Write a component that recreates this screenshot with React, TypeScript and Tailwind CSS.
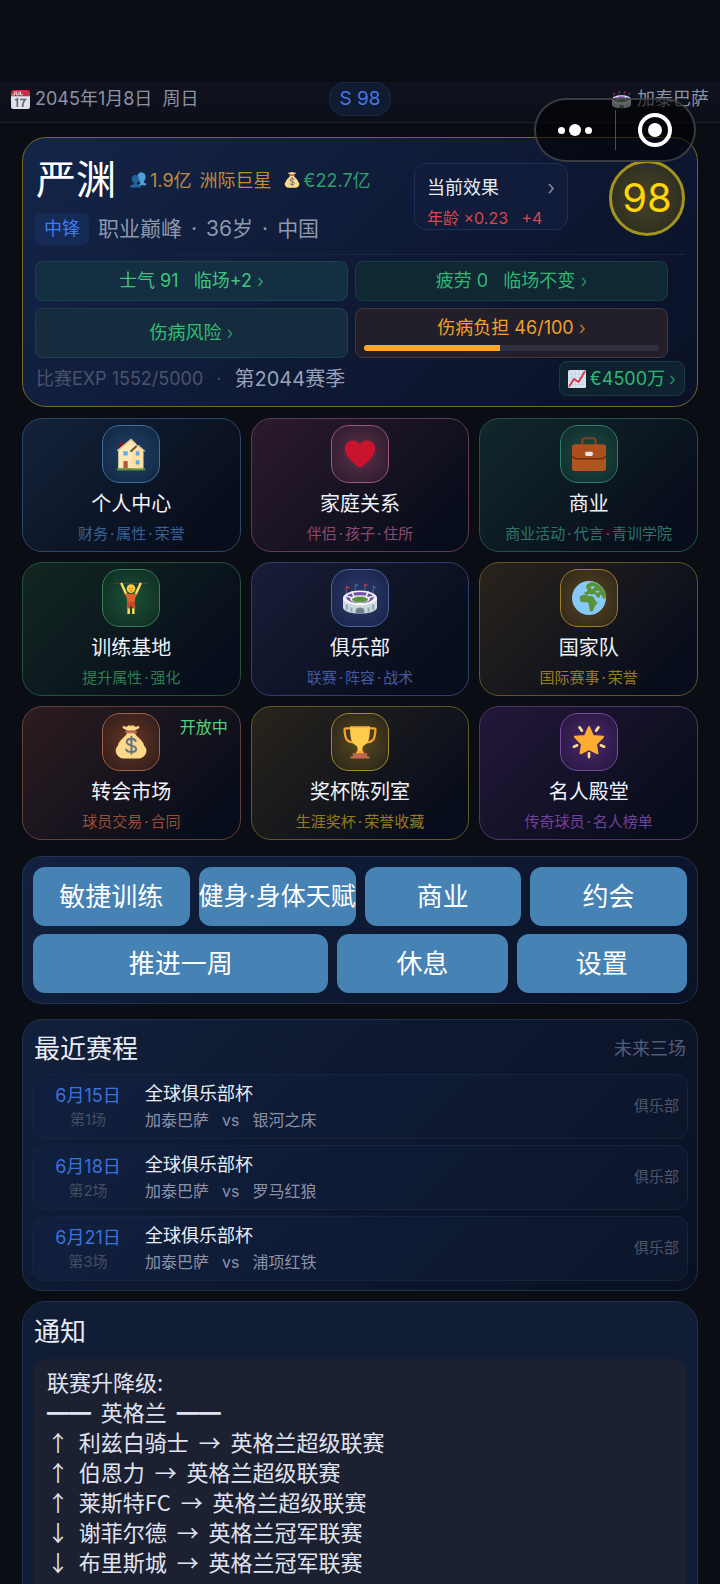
import { Fragment } from "react";
import type { ReactNode } from "react";

type IconProps = { className?: string };

function CalendarIcon({ className }: IconProps) {
  return (
    <svg viewBox="0 0 36 36" className={className} aria-hidden="true">
      <path fill="#dfe3e9" d="M36 32a4 4 0 0 1-4 4H4a4 4 0 0 1-4-4V9h36z" />
      <path fill="#d32b45" d="M30 0H6a6 6 0 0 0-6 6v6h36V6a6 6 0 0 0-6-6" />
      <g stroke="#f3d9de" strokeWidth="2" fill="none">
        <path d="M7 3v5c0 2-4 2-4 0M10 3v4c0 3 5 3 5 0V3M18 3v6h4" />
      </g>
      <g stroke="#5f6872" strokeWidth="3" fill="none">
        <path d="M8 19l4-2v15M17 18h10c-4 4-5 8-5 14" />
      </g>
    </svg>
  );
}

function FansIcon({ className }: IconProps) {
  return (
    <svg viewBox="0 0 36 36" className={className} aria-hidden="true">
      <path
        fill="#4fa0da"
        d="M24 26c-2-1-3-3-2-5-5-3-6-7-5-12 1-6 5-9 10-8 6 1 8 5 8 10 0 4-1 8-4 10 0 2 0 3 2 4l3 1v4H18z"
      />
      <path
        fill="#226699"
        d="M0 35c0-5 3-6 7-7 2-1 2-3 1-4-3-2-4-6-4-9 0-5 3-8 8-8s8 3 8 8c0 4-1 7-4 9-1 2-1 3 1 4 5 1 8 2 8 7z"
      />
    </svg>
  );
}

function MoneyBagIcon({ className }: IconProps) {
  return (
    <svg viewBox="0 0 36 36" className={className} aria-hidden="true">
      <path
        fill="#fdd888"
        d="M31.9 22C30.7 15.500 24 13 22 8.500h-8C12 13 5.300 15.500 4.100 22c-2 2-2.800 5-2 7 1 4 5 6.500 9 6.500h14c4 0 8-2.500 9-6.500.8-2 0-5-2.200-7"
      />
      <path
        fill="#fdd888"
        d="M14.500 6L9.500 3.500c-1-1.500.3-3.500 2-2 1 .8 2.200.5 3-.5 1-1.200 2.200-.8 3.500 0 1.300-.8 2.500-1.200 3.500 0 .8 1 2 1.300 3 .5 1.700-1.500 3 .5 2 2L21.500 6z"
      />
      <path fill="#bf6952" d="M13 6h10a1.300 1.300 0 0 1 0 2.800H13A1.300 1.300 0 0 1 13 6" />
      <path
        fill="none"
        stroke="#67757f"
        strokeWidth="2.200"
        strokeLinecap="round"
        d="M23 17c-1-3-9.500-3.500-9.500 1 0 4.500 10 3 10 7.500 0 4.200-9.500 4-10.500.5M18.500 12.500v18"
      />
    </svg>
  );
}

function ChartIcon({ className }: IconProps) {
  return (
    <svg viewBox="0 0 36 36" className={className} aria-hidden="true">
      <rect width="36" height="36" rx="3" fill="#dde5ec" />
      <path
        stroke="#b9d2e6"
        strokeWidth="1.500"
        d="M8 1v34M15 1v34M22 1v34M29 1v34M1 8h34M1 15h34M1 22h34M1 29h34"
      />
      <path
        fill="none"
        stroke="#dd2e44"
        strokeWidth="3.500"
        strokeLinecap="round"
        strokeLinejoin="round"
        d="M3 32l9-14 9 6L33 4"
      />
    </svg>
  );
}

function HouseIcon({ className }: IconProps) {
  return (
    <svg viewBox="0 0 36 36" className={className} aria-hidden="true">
      <path fill="#5c913b" d="M3 33h30v2.500H3z" />
      <path fill="#8a1022" d="M6 6h5v8H6z" />
      <path fill="#ffe8b6" d="M4.500 14L18 3l13 11v19H4.500z" />
      <path fill="#ffe0a0" d="M19 17l6-6 6 5v17H19z" />
      <path
        fill="none"
        stroke="#e1c78d"
        strokeWidth="1.500"
        d="M3.500 14.500L18 2.500l5 5M32.500 15l-7-6"
      />
      <path stroke="#66543f" strokeWidth="2.200" d="M17.500 15.500l6.500-6" />
      <path fill="#55acee" d="M10 15h4.500v4.500H10zM23 15h4v4.500h-4zM23 24.500h4V29h-4z" />
      <path fill="#b5563c" d="M10 25.500h4.500V33H10z" />
    </svg>
  );
}

function HeartIcon({ className }: IconProps) {
  return (
    <svg viewBox="-2 -2 40 40" className={className} aria-hidden="true">
      <path
        fill="#c9142f"
        d="M35.900 11.800a9.600 9.600 0 0 0-17.900-4.900A9.600 9.600 0 0 0 .1 11.800C.1 20 10 29 18 34.500c8-5.500 17.900-14.500 17.900-22.700"
      />
    </svg>
  );
}

function BriefcaseIcon({ className }: IconProps) {
  return (
    <svg viewBox="0 0 36 36" className={className} aria-hidden="true">
      <path
        fill="none"
        stroke="#8f4219"
        strokeWidth="2"
        d="M11 10V4a2.500 2.500 0 0 1 2.500-2.500h9A2.500 2.500 0 0 1 25 4v6"
      />
      <rect y="8" width="36" height="28" rx="3" fill="#b0541f" />
      <path fill="#ac4f1e" d="M3 8h30a3 3 0 0 1 3 3v9q-2 2-5 2H5q-3 0-5-2v-9a3 3 0 0 1 3-3" />
      <path fill="none" stroke="#6b2a12" strokeWidth="1.400" d="M0 20.500q2 2.500 5 2.500h26q3 0 5-2.500" />
      <rect x="14" y="15.500" width="8" height="4.500" rx="1.500" fill="#e8ebee" />
    </svg>
  );
}

function LifterIcon({ className }: IconProps) {
  return (
    <svg viewBox="0 0 36 36" className={className} aria-hidden="true">
      <path stroke="#44505c" strokeWidth="1" d="M0 2.500h36" />
      <path stroke="#552636" strokeWidth="1.200" d="M2 1.500v2M5 1v3M31 1v3M34 1.500v2" />
      <path
        fill="none"
        stroke="#ffdc5d"
        strokeWidth="2.600"
        strokeLinecap="round"
        d="M8 3l5 11M28 3l-5 11"
      />
      <path fill="#ffdc5d" d="M14.200 28h2.600v7h-2.600zM19.200 28h2.600v7h-2.600z" />
      <circle cx="18" cy="8" r="4.600" fill="#ffcb3c" />
      <path fill="#e0602c" d="M11.500 13l3.500.500h6l3.500-.500-2 5-.500 5h-8l-.500-5z" />
      <path fill="#c44a2a" d="M14 22h8l.8 7h-3.300L18 25.500 16.500 29h-3.300z" />
      <path fill="#9d6b1e" d="M16 7.500h1v1h-1zM19 7.500h1v1h-1zM16.500 10h3v.8h-3z" />
    </svg>
  );
}

function StadiumIcon({ className }: IconProps) {
  return (
    <svg viewBox="0 0 36 36" className={className} aria-hidden="true">
      <path stroke="#66727f" strokeWidth=".8" d="M3.500 5v9M13 3v9M23 3v9M32 5v9" />
      <path fill="#c12a44" d="M3.500 5l4 1.800-4 1.800zM23 2.500l4 1.800-4 1.800z" />
      <path fill="#2d6794" d="M13 2.500l4 1.800-4 1.800zM32 5l4 1.800-4 1.800z" />
      <path fill="#cfd8de" d="M0 18h36v10c0 4-8 6.500-18 6.500S0 32 0 28z" />
      <ellipse cx="18" cy="18" rx="18" ry="8" fill="#eef2f5" />
      <ellipse cx="18" cy="17.500" rx="14.500" ry="5.800" fill="#7450a8" />
      <path
        stroke="#eef2f5"
        strokeWidth="1.600"
        d="M9 11l3 6M27 11l-3 6M4 16l6 2M32 16l-6 2"
      />
      <ellipse cx="18" cy="19" rx="10.500" ry="4" fill="#eef2f5" />
      <ellipse cx="18" cy="19.500" rx="8.500" ry="3" fill="#5c913b" />
      <path stroke="#94a3ae" strokeWidth="2" d="M4 25v6M9 28v5M27 28v5M32 25v6" />
      <path fill="#6f7f8b" d="M13.500 34v-3c0-4 9-4 9 0v3z" />
    </svg>
  );
}

function GlobeIcon({ className }: IconProps) {
  return (
    <svg viewBox="0 0 36 36" className={className} aria-hidden="true">
      <circle cx="18" cy="18" r="18" fill="#88c9f9" />
      <path
        fill="#5c913b"
        d="M8.500 16.500c2-2.500 5-2 7-2 1 1.500 3 1.500 5 1.500 2.500 0 3 3 4.500 5.500 1 1 2.500 0 2 1.500-1 2.500-3.500 3.500-3.500 5.500-.5 2-1.500 4-3 4-2 0-2-3.500-2.500-5.500-.5-1.500.5-3-1-4-2.500-.5-7 .500-8.500-2-.5-2-.500-3.500 0-4.500"
      />
      <path
        fill="#5c913b"
        d="M15 5c1-2 3-2 4-3.500C27 .5 34.500 8 36 17c-1 .500-1.500 3-2.500 2-1-1.500-1.500-4-3.500-4.500-1 .500 0 3-2 3.500-2-.500-2.500-3.500-4-4-2-.500-2.500 1-4 0-1.500-1-3 .500-4.500.5s-3-1-2-2.500c1-.8 2.500-.5 3-2C16.500 8 14 7 15 5"
      />
      <path fill="#88c9f9" d="M20 6c2-1.500 4.500-.5 3.500 1s-4 2.500-3.500-1M25 10.500h4v1.800h-4z" />
    </svg>
  );
}

function TrophyIcon({ className }: IconProps) {
  return (
    <svg viewBox="0 0 36 36" className={className} aria-hidden="true">
      <path
        fill="none"
        stroke="#f5a12d"
        strokeWidth="2.400"
        strokeLinejoin="round"
        d="M9 3.500H3.500c-2 0-2 1-1.800 3C2.500 14 3 18.500 12 18.500M27 3.500h5.500c2 0 2 1 1.800 3C33.500 14 33 18.500 24 18.500"
      />
      <path fill="#ffcc4d" d="M7.500 1.500h21c0 11-1 17.500-6 20-2 1.500-2 3-2 5l1 4h-7l1-4c0-2 0-3.500-2-5-5-2.500-6-9-6-20" />
      <path fill="#ffac33" d="M7.500 1.500h21v1.500h-21zM15 27h6l1.500 3h-9z" />
      <path fill="#c1694f" d="M10.500 30h15v3h2.500v2.500H8V33h2.500z" />
    </svg>
  );
}

function StarIcon({ className }: IconProps) {
  return (
    <svg viewBox="0 0 36 36" className={className} aria-hidden="true">
      <path
        fill="#ffac33"
        stroke="#ffac33"
        strokeWidth="2"
        strokeLinejoin="round"
        d="M18 2l4.200 9.500L33 12.500l-7.500 7.800L27 30l-9-4.500L9 30l1.500-9.700L3 12.500l10.800-1z"
      />
      <path
        stroke="#ffe08a"
        strokeWidth="2.800"
        strokeLinecap="round"
        d="M8 2.500l2.500 3.500M28 2.500L25.500 6M2 23l3.500-1.500M34 23l-3.500-1.500M18 30v4"
      />
    </svg>
  );
}

const tiles = [
  {
    title: "个人中心",
    sub: "财务·属性·荣誉",
    Icon: HouseIcon,
    card: "border-[#2b4668] from-[#14233a]",
    box: "border-[#3f6f9f] from-[#1c426c] to-[#12253f]",
    text: "text-[#376196]",
  },
  {
    title: "家庭关系",
    sub: "伴侣·孩子·住所",
    Icon: HeartIcon,
    card: "border-[#613c57] from-[#2c1a2c]",
    box: "border-[#9a5a7c] from-[#5c3048] to-[#2a1a2c]",
    text: "text-[#8c4a70]",
  },
  {
    title: "商业",
    sub: "商业活动·代言·青训学院",
    Icon: BriefcaseIcon,
    card: "border-[#245048] from-[#11282b]",
    box: "border-[#2e8069] from-[#1c4c42] to-[#0f2a2b]",
    text: "text-[#2a7767]",
  },
  {
    title: "训练基地",
    sub: "提升属性·强化",
    Icon: LifterIcon,
    card: "border-[#24513a] from-[#122620]",
    box: "border-[#357f57] from-[#1a5236] to-[#102a23]",
    text: "text-[#2f7d4e]",
  },
  {
    title: "俱乐部",
    sub: "联赛·阵容·战术",
    Icon: StadiumIcon,
    card: "border-[#323e6c] from-[#191d38]",
    box: "border-[#4c63a0] from-[#2b3b70] to-[#192344]",
    text: "text-[#4459a0]",
  },
  {
    title: "国家队",
    sub: "国际赛事·荣誉",
    Icon: GlobeIcon,
    card: "border-[#655426] from-[#2a231b]",
    box: "border-[#a17f29] from-[#5a4720] to-[#2c2519]",
    text: "text-[#9c7a25]",
  },
  {
    title: "转会市场",
    sub: "球员交易·合同",
    Icon: MoneyBagIcon,
    badge: "开放中",
    card: "border-[#64403a] from-[#2c1c1f]",
    box: "border-[#a55f43] from-[#683720] to-[#2b1b1c]",
    text: "text-[#95503a]",
  },
  {
    title: "奖杯陈列室",
    sub: "生涯奖杯·荣誉收藏",
    Icon: TrophyIcon,
    card: "border-[#625825] from-[#29241b]",
    box: "border-[#a18c2c] from-[#5a4b1c] to-[#26221a]",
    text: "text-[#967a24]",
  },
  {
    title: "名人殿堂",
    sub: "传奇球员·名人榜单",
    Icon: StarIcon,
    card: "border-[#4c3764] from-[#24173a]",
    box: "border-[#76499c] from-[#4c2870] to-[#24173b]",
    text: "text-[#74409a]",
  },
];

const matches = [
  { date: "6月15日", round: "第1场", home: "加泰巴萨", away: "银河之床" },
  { date: "6月18日", round: "第2场", home: "加泰巴萨", away: "罗马红狼" },
  { date: "6月21日", round: "第3场", home: "加泰巴萨", away: "浦项红铁" },
];

const notices = [
  "联赛升降级:",
  "━━  英格兰  ━━",
  "↑  利兹白骑士  →  英格兰超级联赛",
  "↑  伯恩力  →  英格兰超级联赛",
  "↑  莱斯特FC  →  英格兰超级联赛",
  "↓  谢菲尔德  →  英格兰冠军联赛",
  "↓  布里斯城  →  英格兰冠军联赛",
];

const actionClass =
  "flex h-[59px] min-w-0 items-center justify-center rounded-xl bg-[#4682b4] whitespace-nowrap text-white";

function Chevron() {
  return <span className="opacity-70">›</span>;
}

// Joins the parts of a label with evenly spaced middle dots
function Dotted({ text }: { text: string }) {
  return (
    <>
      {text.split("·").map((part, i) => (
        <Fragment key={part}>
          {i > 0 && <span className="mx-[2px]">·</span>}
          {part}
        </Fragment>
      ))}
    </>
  );
}

function StatButton({
  children,
  className,
}: {
  children: ReactNode;
  className: string;
}) {
  return (
    <button
      type="button"
      className={`flex flex-col items-center justify-center rounded-lg border px-2 text-[18px] leading-6 ${className}`}
    >
      {children}
    </button>
  );
}

export default function App() {
  return (
    <div className="relative flex h-screen flex-col overflow-hidden bg-[#0a0d14] pt-[82px] font-['Inter','Noto_Sans_CJK_SC',sans-serif] text-[#e8ecf6]">

      {/* Top bar */}

      <header className="grid h-[41px] shrink-0 grid-cols-[1fr_auto_1fr] items-start border-b border-[#1c202d] bg-linear-to-b from-[#10131f] to-[#0c0f18] px-[11px] text-[18px] leading-[34px] text-[#8c92a5]">

        <div className="flex items-center gap-[5px] whitespace-pre">
          <CalendarIcon className="size-[19px]" />
          {"2045年1月8日  周日"}
        </div>

        <div className="flex h-[34px] items-center rounded-2xl border border-[#1b2949] bg-[#101a30] px-[9px] text-[19px] text-[#4279e4]">
          S 98
        </div>

        <div className="flex items-center justify-end gap-[6px]">
          <StadiumIcon className="size-[19px]" />
          加泰巴萨
        </div>

      </header>

      {/* Host capsule */}

      <div className="absolute top-[98px] right-6 z-10 flex h-16 w-[162px] items-center rounded-full border-2 border-[#45474d]/80 bg-black/55">

        <button type="button" aria-label="更多" className="flex flex-1 items-center justify-center gap-1">
          <span className="size-[7px] rounded-full bg-white" />
          <span className="size-3 rounded-full bg-white" />
          <span className="size-[7px] rounded-full bg-white" />
        </button>

        <span className="h-10 w-px bg-[#4c4e55]" />

        <button type="button" aria-label="关闭" className="flex flex-1 justify-center">
          <span className="flex size-[34px] items-center justify-center rounded-full border-4 border-white">
            <span className="size-[14px] rounded-full bg-white" />
          </span>
        </button>

      </div>

      <main className="flex flex-col px-[22px] pt-[14px]">

        {/* Player */}

        <section className="rounded-3xl border border-[#716a20] bg-linear-135 from-[#142549] via-[#0f1a36] to-[#0a1126] px-3 pb-[10px]">

          <div className="flex h-[117px] items-center justify-between border-b border-[#19243f]">

            <div className="pt-1">

              <div className="flex h-[58px] items-center">
                <h1 className="pr-[14px] pl-px text-[40px] leading-none text-white">严渊</h1>
                <p className="flex items-center gap-1 text-[18px] text-[#c08b38]">
                  <FansIcon className="size-4" />
                  1.9亿
                  <span className="ml-1">洲际巨星</span>
                </p>
                <p className="ml-3 flex items-center gap-1 text-[18px] text-[#2a9f6c]">
                  <MoneyBagIcon className="size-4" />
                  €22.7亿
                </p>
              </div>

              <div className="mt-1 flex items-center gap-[9px]">
                <span className="rounded-md bg-[#152a54] px-[9px] text-[18px] leading-8 text-[#3f7cf0]">
                  中锋
                </span>
                <p className="flex gap-[9px] text-[21px] leading-8 text-[#8e97ab]">
                  <span>职业巅峰</span>
                  <span>·</span>
                  <span>36岁</span>
                  <span>·</span>
                  <span>中国</span>
                </p>
              </div>

            </div>

            <div className="flex items-center gap-[41px]">

              <button
                type="button"
                className="flex h-[67px] w-[154px] flex-col justify-start rounded-xl border border-[#1b3157] bg-[#101c39] px-3 pt-2 text-left"
              >
                <span className="flex w-full shrink-0 items-center justify-between text-[18px] leading-8">
                  当前效果
                  <span className="text-[20px] text-[#7c8499]">›</span>
                </span>
                <span className="shrink-0 text-[16px] leading-7 whitespace-pre text-[#d6484f]">
                  {"年龄 ×0.23   +4"}
                </span>
              </button>

              <div className="mt-1 flex size-[76px] items-center justify-center rounded-full border-[3px] border-[#a2931f] bg-radial from-[#4a4526] to-[#26281f] text-[40px] text-[#ffd60a]">
                98
              </div>

            </div>

          </div>

          <div className="mt-[6px] mr-[17px] grid grid-cols-2 gap-[7px]">

            <StatButton className="h-10 border-[#1c4250] bg-[#142e42] text-[#3fc57c]">
              <span className="whitespace-pre">士气 91   临场+2 <Chevron /></span>
            </StatButton>

            <StatButton className="h-10 border-[#1a3c44] bg-[#102734] text-[#2fb873]">
              <span className="whitespace-pre">疲劳 0   临场不变 <Chevron /></span>
            </StatButton>

            <StatButton className="h-[50px] border-[#1c4048] bg-[#142c3d] text-[#34bd73]">
              <span>伤病风险 <Chevron /></span>
            </StatButton>

            <StatButton className="h-[50px] gap-[5px] border-[#45373b] bg-[#231f2a] text-[#f0a02c]">
              <span>伤病负担 46/100 <Chevron /></span>
              <span className="h-[6px] w-full overflow-hidden rounded-full bg-[#30303f]">
                <span className="block h-full bg-[#ffa726]" style={{ width: "46%" }} />
              </span>
            </StatButton>

          </div>

          <div className="mt-[3px] flex items-center justify-between">

            <p className="flex items-center gap-[13px] pl-px text-[18px] text-[#4a546b]">
              <span>比赛EXP 1552/5000</span>
              <span>·</span>
              <span className="text-[20px] text-[#98a1b8]">第2044赛季</span>
            </p>

            <button
              type="button"
              className="flex h-[35px] items-center gap-1 rounded-lg border border-[#183b44] bg-[#0e2230] px-2 text-[18px] text-[#2fb873]"
            >
              <ChartIcon className="size-[18px]" />
              €4500万 <Chevron />
            </button>

          </div>

        </section>

        {/* Menu */}

        <nav className="mt-[11px] grid grid-cols-3 gap-[10px]">

          {tiles.map(({ title, sub, badge, Icon, card, box, text }) => (

            <button
              key={title}
              type="button"
              className={`relative flex h-[134px] flex-col items-center rounded-[20px] border bg-linear-135 to-[#080d1b] to-85% pt-[6px] ${card}`}
            >
              <span className={`flex size-[58px] items-center justify-center rounded-[18px] border bg-radial ${box}`}>
                <Icon className="size-[34px]" />
              </span>

              <span className="mt-[5px] text-[20px] leading-8 text-[#f0f3fa]">{title}</span>
              <span className={`mt-[2px] text-[15px] leading-6 ${text}`}>
                <Dotted text={sub} />
              </span>

              {badge && (
                <span className="absolute top-2 right-3 text-[16px] text-[#4ed47a]">{badge}</span>
              )}
            </button>

          ))}

        </nav>

        {/* Quick actions */}

        <section className="mt-4 flex flex-col gap-2 rounded-[20px] border border-[#1e3450] bg-linear-135 from-[#12213f] to-[#0a1226] p-[10px]">

          <div className="grid grid-cols-4 gap-[9px] text-[26px]">
            <button type="button" className={actionClass}>敏捷训练</button>
            <button type="button" className={`${actionClass} text-[25px]`}>健身·身体天赋</button>
            <button type="button" className={actionClass}>商业</button>
            <button type="button" className={actionClass}>约会</button>
          </div>

          <div className="grid grid-cols-[26fr_15fr_15fr] gap-[9px] text-[26px]">
            <button type="button" className={actionClass}>推进一周</button>
            <button type="button" className={actionClass}>休息</button>
            <button type="button" className={actionClass}>设置</button>
          </div>

        </section>

        {/* Fixtures */}

        <section className="mt-[15px] rounded-[20px] border border-[#1f3049] bg-linear-135 from-[#12203a] to-[#091023] px-[9px] pb-[9px]">

          <div className="flex h-[54px] items-center justify-between px-[2px] pt-[2px]">
            <h2 className="text-[26px]">最近赛程</h2>
            <span className="text-[18px] text-[#555b76]">未来三场</span>
          </div>

          <ul className="flex flex-col gap-[6px]">

            {matches.map((match) => (

              <li
                key={match.date}
                className="flex h-[65px] items-center rounded-xl border border-[#16253f] bg-linear-135 from-[#11203f] to-[#0c152a] px-2"
              >
                <div className="w-[94px] pt-[2px] text-center">
                  <p className="text-[18px] leading-6 text-[#3b72dd]">{match.date}</p>
                  <p className="text-[15px] leading-6 text-[#444d62]">{match.round}</p>
                </div>

                <div className="ml-[10px] flex-1">
                  <p className="text-[18px] leading-[26px]">全球俱乐部杯</p>
                  <p className="flex gap-[13px] text-[16px] leading-[26px] text-[#8a92a8]">
                    <span>{match.home}</span>
                    <span>vs</span>
                    <span>{match.away}</span>
                  </p>
                </div>

                <span className="text-[15px] text-[#4d566d]">俱乐部</span>
              </li>

            ))}

          </ul>

        </section>

        {/* Notices */}

        <section className="mt-[10px] rounded-3xl border border-[#1f3050] bg-[#111d34] px-[11px] pb-4">

          <h2 className="pt-[2px] text-[26px] leading-[55px]">通知</h2>

          <div className="rounded-xl bg-[#1c2132] px-[13px] pt-[7px] pb-10 font-['Noto_Sans_CJK_SC',sans-serif] text-[22px] leading-[30px] text-[#e0e4f2]">
            {notices.map((line) => (
              <p key={line} className="whitespace-pre">{line}</p>
            ))}
          </div>

        </section>

      </main>

    </div>
  );
}
